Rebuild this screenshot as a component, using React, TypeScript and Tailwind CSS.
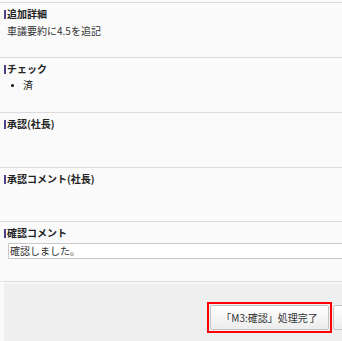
import React from "react";

const font = { fontFamily: '"Noto Sans CJK JP", "Noto Sans", sans-serif' };

function Heading({ children }: { children: React.ReactNode }) {
  return (
    <div className="flex items-center h-[12px]">
      <div className="w-[2px] h-[9px] bg-[#4e3f8a]" />
      <div className="ml-[1px] text-[10px] leading-[12px] font-bold text-[#222]">{children}</div>
    </div>
  );
}

function Section({ title, children, h }: { title: string; children?: React.ReactNode; h: string }) {
  return (
    <div className={`border-t border-[#dadada] shadow-[0_1px_0_#ececec] pl-[4px] pt-[5px] ${h}`}>
      <Heading>{title}</Heading>
      {children}
    </div>
  );
}

export default function App() {
  return (
    <div className="w-[342px] h-[341px] overflow-hidden bg-[#fafafa] pt-[2px] text-[#333]" style={font}>
      <Section title="追加詳細" h="h-[55px]">
        <div className="mt-[5px] ml-[3px] text-[10px] leading-[12px]">車議要約に4.5を追記</div>
      </Section>
      <Section title="チェック" h="h-[55px]">
        <div className="mt-[4px] flex items-center text-[10px] leading-[12px]">
          <div className="ml-[7px] w-[3px] h-[3px] rounded-full bg-[#111]" />
          <div className="ml-[9px] text-[#222]">済</div>
        </div>
      </Section>
      <Section title="承認(社長)" h="h-[55px]" />
      <Section title="承認コメント(社長)" h="h-[54px]" />
      <Section title="確認コメント" h="h-[60px]">
        <div className="mt-[4px] ml-[4px] w-[400px] h-[16px] border border-[#c9c9c9] bg-white text-[10px] leading-[14px] pl-[1px]">
          確認しました。
        </div>
      </Section>
      <div className="ml-[4px] border-t border-[#dcdcdc] pt-[2px] bg-[#f6f6f6]">
        <div className="bg-[#efefef] h-[60px] pt-[18px] pl-[203px] flex items-start gap-[1px]">
          <div className="border-2 border-[#ff0000] p-[1px] shrink-0">
            <div className="w-[119px] h-[25px] border border-[#c4c4c4] rounded-[2px] bg-gradient-to-b from-white to-[#ececec] flex items-center justify-center text-[10px] text-[#333]">
              「M3:確認」処理完了
            </div>
          </div>
          <div className="mt-[3px] w-[80px] h-[25px] shrink-0 border border-[#c4c4c4] rounded-[2px] bg-gradient-to-b from-white to-[#ececec]" />
        </div>
      </div>
    </div>
  );
}
